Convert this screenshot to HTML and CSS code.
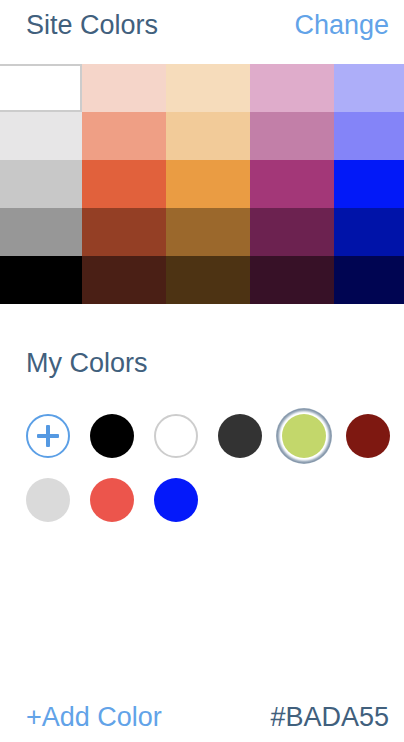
FILE: index.html
```html
<!DOCTYPE html>
<html>
<head>
<meta charset="utf-8">
<link rel="stylesheet" href="styles.css">
</head>
<body>
<div class="app">
  <header class="header">
    <span class="title">Site Colors</span>
    <span class="link">Change</span>
  </header>
  <div class="palette">
    <div class="cell selected" style="background:#ffffff"></div>
    <div class="cell" style="background:#f5d5c9"></div>
    <div class="cell" style="background:#f6dcbb"></div>
    <div class="cell" style="background:#dfaccb"></div>
    <div class="cell" style="background:#adaef9"></div>

    <div class="cell" style="background:#e7e6e7"></div>
    <div class="cell" style="background:#ef9f85"></div>
    <div class="cell" style="background:#f2cb99"></div>
    <div class="cell" style="background:#c27fa8"></div>
    <div class="cell" style="background:#8484f8"></div>

    <div class="cell" style="background:#c8c8c8"></div>
    <div class="cell" style="background:#e1613c"></div>
    <div class="cell" style="background:#ea9c43"></div>
    <div class="cell" style="background:#a33778"></div>
    <div class="cell" style="background:#0219f8"></div>

    <div class="cell" style="background:#979797"></div>
    <div class="cell" style="background:#943f25"></div>
    <div class="cell" style="background:#9b682c"></div>
    <div class="cell" style="background:#6c2250"></div>
    <div class="cell" style="background:#0013a9"></div>

    <div class="cell" style="background:#000000"></div>
    <div class="cell" style="background:#4a1f15"></div>
    <div class="cell" style="background:#4d3313"></div>
    <div class="cell" style="background:#371127"></div>
    <div class="cell" style="background:#000552"></div>
  </div>

  <section class="mine">
    <h2 class="title">My Colors</h2>
    <div class="swatches">
      <div class="swatch add"><span class="plus-h"></span><span class="plus-v"></span></div>
      <div class="swatch" style="background:#000000"></div>
      <div class="swatch outlined" style="background:#ffffff"></div>
      <div class="swatch" style="background:#333333"></div>
      <div class="swatch current" style="background:#c3d76b"></div>
      <div class="swatch" style="background:#7e1811"></div>
      <div class="swatch" style="background:#dadada"></div>
      <div class="swatch" style="background:#ec554c"></div>
      <div class="swatch" style="background:#0419fa"></div>
    </div>
  </section>

  <footer class="footer">
    <span class="link">+Add Color</span>
    <span class="hex">#BADA55</span>
  </footer>
</div>
</body>
</html>
```

FILE: styles.css
```css
html, body {
  margin: 0;
  padding: 0;
  background: #ffffff;
}

body {
  font-family: "Liberation Sans", Arial, sans-serif;
  font-size: 27px;
  line-height: 32px;
  color: #41607d;
}

.app {
  display: flex;
  flex-direction: column;
  min-height: 742px;
  width: 404px;
  overflow: hidden;
}

.header {
  display: flex;
  justify-content: space-between;
  align-items: flex-start;
  height: 55px;
  padding: 9px 15px 0 26px;
}

.title {
  color: #41607d;
  font-weight: normal;
  font-size: 27px;
  line-height: 32px;
  margin: 0;
}

.link {
  color: #62a3e8;
}

.palette {
  display: grid;
  grid-template-columns: 82px 84px 84px 84px 70px;
  grid-auto-rows: 48px;
}

.cell {
  box-sizing: border-box;
}

.cell.selected {
  border: 2px solid #cccccc;
  border-left: 0;
}

.mine {
  padding: 43px 14px 0 26px;
}

.swatches {
  display: flex;
  flex-wrap: wrap;
  gap: 20px;
  margin-top: 35px;
}

.swatch {
  position: relative;
  width: 44px;
  height: 44px;
  border-radius: 50%;
  box-sizing: border-box;
}

.swatch.outlined {
  border: 2px solid #cdcdcd;
}

.swatch.add {
  border: 2px solid #5b9fe6;
}

.plus-h,
.plus-v {
  position: absolute;
  background: #5599e2;
  border-radius: 1px;
}

.plus-h {
  left: 9px;
  top: 18px;
  width: 22px;
  height: 4px;
}

.plus-v {
  left: 18px;
  top: 9px;
  width: 4px;
  height: 22px;
}

.swatch.current::before {
  content: "";
  position: absolute;
  inset: -6px;
  border-radius: 50%;
  background: radial-gradient(closest-side, #ffffff 82%, #e4e9ee 86%, #a9b7c5 91%, #8596a9 96%, #9fb0c0 100%);
}

.swatch.current::after {
  content: "";
  position: absolute;
  inset: 0;
  border-radius: 50%;
  background: inherit;
}

.footer {
  margin-top: auto;
  display: flex;
  justify-content: space-between;
  padding: 0 15px 9px 26px;
}

.hex {
  color: #41607d;
}
```
